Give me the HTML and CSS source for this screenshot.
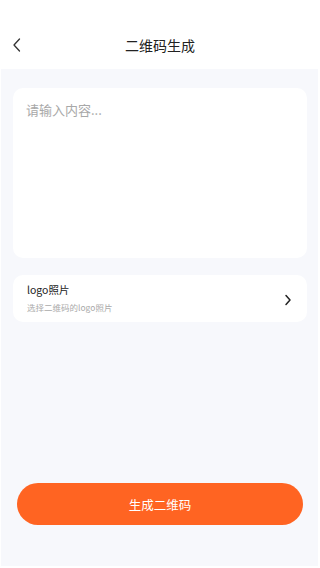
FILE: index.html
```html
<!DOCTYPE html>
<html lang="zh">
<head>
<meta charset="utf-8">
<meta name="viewport" content="width=device-width, initial-scale=1">
<link rel="stylesheet" href="styles.css">
<title>二维码生成</title>
</head>
<body>
<header class="nav">
  <span class="back">
    <svg width="10" height="14" viewBox="0 0 10 14"><path d="M7.5 1 L2 7 L7.5 13" fill="none" stroke="#333" stroke-width="1.3" stroke-linecap="round" stroke-linejoin="round"/></svg>
  </span>
  <h1 class="title">二维码生成</h1>
</header>
<main class="panel">
  <div class="card input-card">
    <div class="placeholder">请输入内容...</div>
  </div>
  <div class="card row-card">
    <div class="row-text">
      <div class="row-title">logo照片</div>
      <div class="row-sub">选择二维码的logo照片</div>
    </div>
    <svg class="chev" width="8" height="12" viewBox="0 0 8 12"><path d="M2 1.5 L6 6 L2 10.5" fill="none" stroke="#222" stroke-width="1.5" stroke-linecap="round" stroke-linejoin="round"/></svg>
  </div>
  <div class="spacer"></div>
  <button class="btn">生成二维码</button>
</main>
</body>
</html>
```
FILE: styles.css
```css
* { box-sizing: border-box; }
html, body { margin: 0; padding: 0; }
body {
  width: 320px;
  height: 568px;
  background: #fff;
  font-family: "Noto Sans CJK SC", "Noto Sans", sans-serif;
  overflow: hidden;
}
.nav {
  height: 69px;
  position: relative;
  display: flex;
  align-items: flex-end;
  justify-content: center;
  padding-bottom: 13px;
}
.back {
  position: absolute;
  left: 12px;
  top: 38px;
  display: flex;
}
.title {
  margin: 0;
  font-size: 14px;
  font-weight: 400;
  color: #222;
  line-height: 22px;
}
.panel {
  margin-left: 1px;
  width: 317px;
  height: 497px;
  background: #f7f8fc;
  display: flex;
  flex-direction: column;
  padding: 19px 11px 41px 12px;
}
.card {
  background: #fff;
  border-radius: 10px;
  width: 294px;
}
.input-card {
  height: 170px;
  padding: 12px 13px;
}
.placeholder {
  font-size: 13px;
  color: #a8a8a8;
  line-height: 20px;
}
.row-card {
  margin-top: 17px;
  height: 47px;
  display: flex;
  align-items: center;
  justify-content: space-between;
  padding: 0 15px 0 14px;
}
.row-text { display: flex; flex-direction: column; }
.row-title {
  font-size: 10.5px;
  color: #222;
  line-height: 15px;
  margin-top: -2px;
}
.row-sub {
  font-size: 8.5px;
  color: #aaa;
  line-height: 12px;
  margin-top: 4px;
}
.chev { margin-top: 2px; }
.spacer { flex: 1; }
.btn {
  margin-left: 4px;
  width: 286px;
  height: 42px;
  border: 0;
  border-radius: 21px;
  background: #ff6422;
  color: #fff;
  font-family: inherit;
  font-size: 12.5px;
  padding: 0;
}
```
